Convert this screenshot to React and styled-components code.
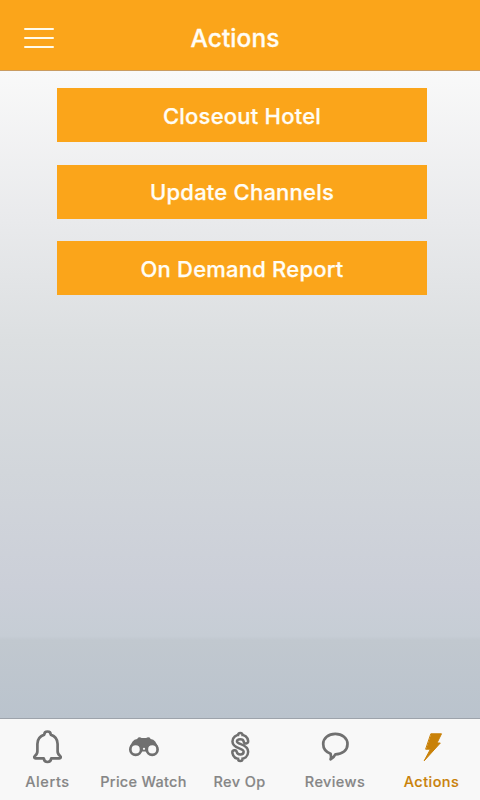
import React from "react";
import styled, { createGlobalStyle } from "styled-components";

const GlobalStyle = createGlobalStyle`
  * { box-sizing: border-box; }
  body { margin: 0; font-family: Inter, "Liberation Sans", sans-serif; }
`;

const Screen = styled.div`
  width: 480px;
  height: 800px;
  display: flex;
  flex-direction: column;
  overflow: hidden;
`;

const Header = styled.header`
  height: 71px;
  flex: none;
  display: grid;
  grid-template-columns: 78px 1fr 88px;
  align-items: center;
  background: #fba51a;
  border-bottom: 1px solid #c99b60;
  padding-top: 5px;
`;

const MenuButton = styled.button`
  border: 0;
  background: none;
  padding: 0 0 0 24px;
  display: flex;
  flex-direction: column;
  gap: 7px;
`;

const MenuBar = styled.span`
  width: 30px;
  height: 2px;
  border-radius: 1px;
  background: #fffbea;
`;

const Title = styled.h1`
  margin: 0;
  text-align: center;
  color: #fffdf5;
  font-size: 24.5px;
  line-height: 30px;
  font-weight: 500;
  letter-spacing: 0.05px;
  -webkit-text-stroke: 0.3px #fffdf5;
`;

const Content = styled.main`
  flex: 1;
  display: flex;
  flex-direction: column;
  gap: 22.5px;
  padding: 17.4px 53px 0 57px;
  background: linear-gradient(
    #f9f9f9 0,
    #e9eaec 150px,
    #dcdfe1 270px,
    #d2d6db 400px,
    #cbcfd8 515px,
    #c6cdd5 565px,
    #c1c8cf 569px,
    #bac3cd 100%
  );
`;

const ActionButton = styled.button`
  height: 54px;
  flex: none;
  border: 0;
  padding: 1px 0 0;
  background: #fba51a;
  color: #fffdf5;
  font: 500 22px/28px Inter, "Liberation Sans", sans-serif;
  letter-spacing: 0.22px;
  -webkit-text-stroke: 0.25px #fffdf5;
`;

const TabBar = styled.nav`
  height: 82px;
  flex: none;
  display: grid;
  grid-template-columns: 95px 97px 95px 96px 97px;
  background: #f8f8f8;
  border-top: 1px solid #9da3ab;
`;

const Tab = styled.button`
  border: 0;
  background: none;
  padding: 8px 0 0;
  display: flex;
  flex-direction: column;
  align-items: center;
  color: ${(p) => (p.$active ? "#c98108" : "#707070")};
`;

const TabIcon = styled.svg`
  width: 40px;
  height: 40px;
  flex: none;
  fill: none;
  stroke: currentColor;
  stroke-width: 2.7;
  stroke-linecap: round;
  stroke-linejoin: round;
`;

const TabLabel = styled.span`
  margin-top: 5px;
  font: 500 14.5px/20px Inter, "Liberation Sans", sans-serif;
  letter-spacing: ${(p) => p.$tracking}px;
  white-space: nowrap;
  color: ${(p) => (p.$active ? "#c98108" : "#868686")};
  -webkit-text-stroke: 0.15px currentColor;
`;

const dollarPath =
  "M25.9 14.2C25.4 11.2 23.2 10 20.2 10C16.9 10 14.7 11.8 14.7 14.5C14.7 20.3 25.9 18.3 25.9 24.8C25.9 28 23.5 29.7 20.3 29.7C17.3 29.7 15.1 28.2 14.6 25.5M20.3 8.2V10M20.3 29.7V31.8";

const icons = {
  bell: (
    <path d="M16.3 7.6C16.3 5.6 17.6 4.5 19.5 4.5S22.7 5.6 22.7 7.6C27.3 9.2 29.6 12.2 29.6 17V24.2C29.6 26.6 30.4 27.7 32.2 29C33.3 29.9 32.8 31.3 31.4 31.3H23.3C22.9 33.8 21.4 35 19.5 35S16.1 33.8 15.7 31.3H7.6C6.2 31.3 5.7 29.9 6.8 29C8.6 27.7 9.4 26.6 9.4 24.2V17C9.4 12.2 11.7 9.2 16.3 7.6Z" />
  ),
  binoculars: (
    <>
      <path
        fill="currentColor"
        stroke="none"
        d="M14.3 10.6Q16 9.5 17.5 11H22.2Q23.8 9.5 25.6 10.6L26.7 12.1Q29.6 12.2 31.2 14.5L34 19.2L28 28L21.5 24.5H18.2L12 28L5.8 19.2L8.6 14.5Q10.2 12.2 13.1 12.1Z"
      />
      <circle cx="11.7" cy="22.4" r="5.4" fill="#f8f8f8" />
      <circle cx="28.2" cy="22.4" r="5.4" fill="#f8f8f8" />
      <circle cx="20" cy="21.8" r="1.1" fill="#f8f8f8" stroke="none" />
    </>
  ),
  dollar: (
    <>
      <path d={dollarPath} strokeWidth="7" />
      <path d={dollarPath} stroke="#f8f8f8" strokeWidth="2" />
    </>
  ),
  bubble: (
    <path d="M15.6 26.7C10.9 25 8.2 21.5 8.2 17C8.2 11.1 13.4 6.9 20.3 6.9S32.5 11.1 32.5 17C32.5 23.3 27.4 27.3 20.4 27.3C19.5 29.5 18.2 31 15.6 32.3C16.2 30.2 16.2 28.5 15.6 26.7Z" />
  ),
  bolt: (
    <path
      fill="currentColor"
      strokeWidth="1"
      d="M19.2 6.8H29.5L25 16H28.3L12.2 33.8L18.4 22.2H14Z"
    />
  ),
};

const actions = ["Closeout Hotel", "Update Channels", "On Demand Report"];

const tabs = [
  { label: "Alerts", icon: "bell", tracking: 0.6 },
  { label: "Price Watch", icon: "binoculars", tracking: 0.28 },
  { label: "Rev Op", icon: "dollar", tracking: 0.4 },
  { label: "Reviews", icon: "bubble", tracking: 0.4 },
  { label: "Actions", icon: "bolt", tracking: 0.45, active: true },
];

export default function App() {
  return (
    <>
      <GlobalStyle />
      <Screen>
        <Header>
          <MenuButton aria-label="Menu">
            <MenuBar />
            <MenuBar />
            <MenuBar />
          </MenuButton>
          <Title>Actions</Title>
        </Header>
        <Content>
          {actions.map((label) => (
            <ActionButton key={label}>{label}</ActionButton>
          ))}
        </Content>
        <TabBar>
          {tabs.map((t) => (
            <Tab key={t.label} $active={t.active}>
              <TabIcon viewBox="0 0 40 40">{icons[t.icon]}</TabIcon>
              <TabLabel $active={t.active} $tracking={t.tracking}>
                {t.label}
              </TabLabel>
            </Tab>
          ))}
        </TabBar>
      </Screen>
    </>
  );
}
